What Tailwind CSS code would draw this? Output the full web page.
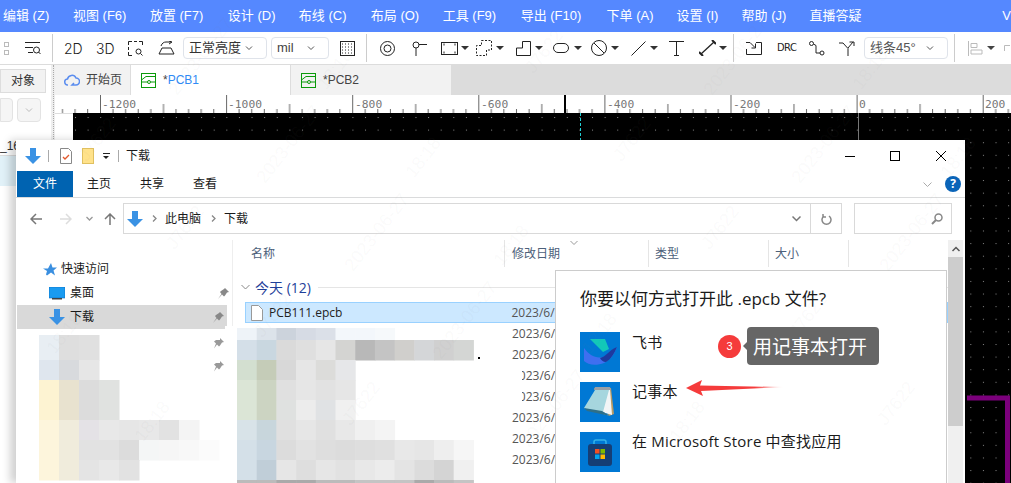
<!DOCTYPE html>
<html lang="zh">
<head>
    <meta charset="UTF-8">
    <title>PCB</title>
    <script src="https://cdn.jsdelivr.net/npm/@tailwindcss/browser@4"></script>
</head>
<body class="bg-white">
<div class="relative w-[1011px] h-[483px] overflow-hidden font-['Liberation_Sans','Noto_Sans_CJK_SC',sans-serif] text-[13px] text-[#222]">

    <!-- menu bar -->
    <div class="h-8 bg-[#5588ff] text-white flex items-center text-[13px] whitespace-nowrap">
        <span class="ml-[3px] w-[70px]">编辑 (Z)</span>
        <span class="w-[77px]">视图 (F6)</span>
        <span class="w-[78px]">放置 (F7)</span>
        <span class="w-[71px]">设计 (D)</span>
        <span class="w-[72px]">布线 (C)</span>
        <span class="w-[72px]">布局 (O)</span>
        <span class="w-[78px]">工具 (F9)</span>
        <span class="w-[86px]">导出 (F10)</span>
        <span class="w-[70px]">下单 (A)</span>
        <span class="w-[65px]">设置 (I)</span>
        <span class="w-[68px]">帮助 (J)</span>
        <span class="w-[193px]">直播答疑</span>
        <span>V</span>
    </div>

    <!-- toolbar -->
    <div class="h-[33px] border-b border-[#dcdcdc] flex items-center relative">
        <div class="ml-1 flex flex-col gap-[3px]"><i class="block w-[5px] h-[5px] border border-[#bbb]"></i><i class="block w-[5px] h-[5px] border border-[#bbb]"></i></div>
        <svg class="ml-4 w-4 h-4" viewBox="0 0 16 16" fill="none" stroke="#222"><path d="M0 2.500h15M0 7.500h8M3 12.500h5"/><circle cx="11.500" cy="10" r="3"/><path d="M13.500 12l2 2"/></svg>
        <i class="ml-[11px] w-px h-7 bg-[#ccc]"></i>
        <span class="ml-[11px] w-[32px] font-['Inter',sans-serif] font-light text-[14px]">2D</span>
        <span class="w-[32px] font-['Inter',sans-serif] font-light text-[14px]">3D</span>
        <svg class="w-[15px] h-[15px]" viewBox="0 0 15 15" fill="none" stroke="#222"><path d="M.5 4V.5H4M6 .5h3M11 .5h3.500V4M.5 6v3M.5 11v3.500H4"/><circle cx="10.500" cy="10.500" r="2.500"/><path d="M12.500 12.500l2 2"/></svg>
        <svg class="ml-[15px] w-[17px] h-[14px]" viewBox="0 0 17 14" fill="none" stroke="#222"><path d="M3 5C4 2 6 1 8 1h5M11 0l3 1-3 2M4 7h9l3 6H1z"/></svg>
        <div class="ml-[8px] w-[84px] h-[22px] border border-[#dfe3ea] rounded-sm flex items-center justify-between px-[5px] text-[#333]"><span>正常亮度</span><svg class="w-2 h-2 mr-2" viewBox="0 0 8 8" fill="none" stroke="#555"><path d="M1 2.500l3 3 3-3"/></svg></div>
        <div class="ml-[4px] w-[58px] h-[22px] border border-[#dfe3ea] rounded-sm flex items-center justify-between px-[5px] text-[#444]"><span>mil</span><svg class="w-2 h-2 mr-2" viewBox="0 0 8 8" fill="none" stroke="#555"><path d="M1 2.500l3 3 3-3"/></svg></div>
        <svg class="ml-[11px] w-[15px] h-[15px]" viewBox="0 0 15 15" fill="none" stroke="#222"><rect x=".5" y=".5" width="14" height="14"/><path d="M2 3h11M2 6h11M2 9h11M2 12h11" stroke-dasharray="1 2"/></svg>
        <i class="ml-[11px] w-px h-7 bg-[#ccc]"></i>
        <svg class="ml-[13px] w-[15px] h-[15px]" viewBox="0 0 15 15" fill="none" stroke="#222"><circle cx="7.500" cy="7.500" r="7"/><circle cx="7.500" cy="7.500" r="3.500"/></svg>
        <svg class="ml-[17px] w-[15px] h-[15px]" viewBox="0 0 15 15" fill="none" stroke="#222"><circle cx="4" cy="4" r="3"/><path d="M7 3.500h8M4 7v8"/></svg>
        <svg class="ml-[14px] w-[17px] h-[13px]" viewBox="0 0 17 13" fill="none" stroke="#222"><rect x=".5" y=".5" width="16" height="12"/><path d="M2.500 2.500h1M13.500 2.500h1M2.500 10.500h1M13.500 10.500h1" stroke-width="2"/></svg>
        <i class="ml-[3px] border-x-[4px] border-x-transparent border-t-[4px] border-t-[#333]"></i>
        <svg class="ml-[7px] w-[16px] h-[16px]" viewBox="0 0 16 16" fill="none" stroke="#222" stroke-dasharray="2 1.500"><path d="M5.500 .5H15.500V10H10.500V15.500H.5V5.500H5.500Z"/></svg>
        <i class="ml-[4px] border-x-[4px] border-x-transparent border-t-[4px] border-t-[#333]"></i>
        <svg class="ml-[12px] w-[15px] h-[15px]" viewBox="0 0 15 15" fill="none" stroke="#222"><path d="M6.500 .5H14.500V14.500H.5V7H6.500Z"/></svg>
        <i class="ml-[4px] border-x-[4px] border-x-transparent border-t-[4px] border-t-[#333]"></i>
        <svg class="ml-[10px] w-[16px] h-[10px]" viewBox="0 0 16 10" fill="none" stroke="#222"><rect x=".5" y=".5" width="15" height="9" rx="4.500"/></svg>
        <i class="ml-[5px] border-x-[4px] border-x-transparent border-t-[4px] border-t-[#333]"></i>
        <svg class="ml-[9px] w-[16px] h-[16px]" viewBox="0 0 16 16" fill="none" stroke="#222"><circle cx="8" cy="8" r="7.500"/><path d="M3 3l10 10"/></svg>
        <i class="ml-[4px] border-x-[4px] border-x-transparent border-t-[4px] border-t-[#333]"></i>
        <svg class="ml-[12px] w-[15px] h-[15px]" viewBox="0 0 15 15" fill="none" stroke="#222"><path d="M.5 14.500l14-14"/></svg>
        <i class="ml-[4px] border-x-[4px] border-x-transparent border-t-[4px] border-t-[#333]"></i>
        <svg class="ml-[11px] w-[15px] h-[15px]" viewBox="0 0 15 15" fill="none" stroke="#222"><path d="M0 .5h15M7.500 .5v14M5 14.500h5"/></svg>
        <svg class="ml-[15px] w-[17px] h-[16px]" viewBox="0 0 17 16" fill="none" stroke="#222"><path d="M2 14L15 2" stroke-width="1.300"/><path d="M0 12l4 4M13 0l4 4" stroke-width="2"/></svg>
        <i class="ml-[3px] border-x-[4px] border-x-transparent border-t-[4px] border-t-[#333]"></i>
        <i class="ml-[6px] w-px h-7 bg-[#ccc]"></i>
        <svg class="ml-[12px] w-[16px] h-[13px]" viewBox="0 0 16 13" fill="none" stroke="#222"><path d="M0 .5h4l5 5M9.500 1.500v4.500H5.500M10 .5h5.500V12.500H.5V7"/></svg>
        <span class="ml-[15px] w-[32px] font-['DejaVu_Sans',sans-serif] font-stretch-condensed text-[11px] tracking-[-0.5px]">DRC</span>
        <svg class="w-[16px] h-[15px]" viewBox="0 0 16 15" fill="none" stroke="#222"><circle cx="2.500" cy="2.500" r="2"/><circle cx="13" cy="12" r="2"/><path d="M4.500 3L7 4.500v7.500h4"/></svg>
        <svg class="ml-[14px] w-[16px] h-[15px]" viewBox="0 0 16 15" fill="none" stroke="#222"><path d="M0 2h4l5 5.500V15M9 7l5-6M10.500 1H15V5"/></svg>
        <div class="ml-[9px] w-[84px] h-[22px] border border-[#dfe3ea] rounded-sm flex items-center justify-between px-[5px] text-[#555]"><span>线条45°</span><svg class="w-2 h-2 mr-2" viewBox="0 0 8 8" fill="none" stroke="#555"><path d="M1 2.500l3 3 3-3"/></svg></div>
        <i class="ml-[6px] w-px h-7 bg-[#ccc]"></i>
        <svg class="ml-[13px] w-[15px] h-[15px]" viewBox="0 0 15 15" fill="none" stroke="#bbb"><path d="M.5 0v15M3 2.500h6v4H3zM3 9h11v4H3z"/></svg>
        <i class="ml-[4px] border-x-[4px] border-x-transparent border-t-[4px] border-t-[#444]"></i>
        <svg class="ml-[9px] w-[6px] h-[6px]" viewBox="0 0 6 6" fill="none" stroke="#bbb"><path d="M.5 6V.5H6"/></svg>
    </div>

    <!-- tabs and canvas -->
    <div class="flex h-[418px]">
        <div class="w-[51px] shrink-0 pt-1 text-[#333]">
            <div class="w-[46px] h-[24px] bg-[#f2f2f2] border border-[#ddd] flex items-center justify-center text-[12px]">对象</div>
            <div class="flex gap-1 mt-[5px]">
                <div class="w-[13px] h-6 border border-[#e3e3e3] rounded-r bg-[#f5f5f5]"></div>
                <div class="w-6 h-6 border border-[#e3e3e3] rounded bg-[#f5f5f5] flex items-center justify-center"><svg class="w-2 h-2" viewBox="0 0 8 8" fill="none" stroke="#bbb"><path d="M1 2.500l3 3 3-3"/></svg></div>
            </div>
            <div class="mt-[14px] border-b border-[#ddd] h-[20px] text-[12px] leading-5">_16</div>
            <div class="h-[30px] bg-[#e1f1f8]"></div>
        </div>
        <div class="w-1 shrink-0 bg-[#eee] flex justify-center"><i class="block w-px h-full border-l border-dotted border-[#aaa]"></i></div>
        <div class="flex-1 min-w-0 flex flex-col">
            <div class="h-[30px] flex bg-[#dcdcdc] shrink-0 text-[12px]">
                <div class="w-[76px] bg-[#f2f2f2] flex items-center gap-[6px] pl-[9px] border-r border-[#ddd]">
                    <svg class="w-[16px] h-[12px]" viewBox="0 0 16 12" fill="none" stroke="#5b8def" stroke-width="1.500"><path d="M4 11a3 3 0 0 1-.5-6 4.500 4.500 0 0 1 8.500-1 3.500 3.500 0 0 1 0 7H8l2-2"/></svg>
                    <span class="text-[#444]">开始页</span>
                </div>
                <div class="w-[160px] bg-white flex items-center pl-[10px] border-r border-[#ddd]">
                    <svg class="w-[15px] h-[15px] mr-[7px]" viewBox="0 0 15 15" fill="none" stroke="#0a9a0a"><rect x=".5" y=".5" width="14" height="14"/><circle cx="8" cy="9" r="1.500"/><path d="M.5 9H6.500M10 9h4.500M.5 7L5 3.500h9.500"/></svg>
                    <span class="text-[#2f8bf5]"><span class="text-[#444]">*</span>PCB1</span>
                </div>
                <div class="w-[160px] bg-[#f2f2f2] flex items-center pl-[10px]">
                    <svg class="w-[15px] h-[15px] mr-[7px]" viewBox="0 0 15 15" fill="none" stroke="#0a9a0a"><rect x=".5" y=".5" width="14" height="14"/><circle cx="8" cy="9" r="1.500"/><path d="M.5 9H6.500M10 9h4.500M.5 7L5 3.500h9.500"/></svg>
                    <span class="text-[#444]">*PCB2</span>
                </div>
            </div>
            <!-- ruler -->
            <svg class="h-[18px] w-[956px] shrink-0 bg-white" viewBox="0 0 956 18" font-family="DejaVu Sans Mono" font-size="11.300" fill="#777">
                <defs><pattern id="ticks" x="45" width="126.100" height="18" patternUnits="userSpaceOnUse"><path d="M.5 0v18M63.500 9v9M13 14v4M25.600 14v4M38.200 14v4M50.800 14v4M76 14v4M88.600 14v4M101.200 14v4M113.800 14v4" stroke="#666" fill="none"/></pattern></defs>
                <rect width="956" height="18" fill="url(#ticks)"/>
                <rect x="509" width="2" height="18" fill="#000"/>
                <text x="47" y="13">-1200</text><text x="173" y="13">-1000</text><text x="300" y="13">-800</text><text x="426" y="13">-600</text><text x="552" y="13">-400</text><text x="678" y="13">-200</text><text x="804" y="13">0</text><text x="930" y="13">200</text>
            </svg>
            <div class="flex-1 flex min-h-0">
                <div class="w-[18px] bg-white shrink-0 border-t border-[#ddd]"></div>
                <svg class="flex-1 h-[371px] bg-black" viewBox="0 0 938 371">
                    <defs><pattern id="dots" x="2" y="4" width="12.610" height="12.610" patternUnits="userSpaceOnUse"><rect width="1" height="1" fill="#8a8a8a"/></pattern></defs>
                    <rect width="938" height="371" fill="url(#dots)"/>
                    <path d="M507.500 0v27" stroke="#22d3d8" stroke-dasharray="3 2"/>
                    <path d="M785.500 0v27" stroke="#777"/>
                    <path d="M894 285H934.500V371" fill="none" stroke="#7b007b" stroke-width="5"/>
                </svg>
            </div>
        </div>
    </div>

    <!-- explorer window -->
    <div class="absolute left-4 top-[140px] w-[949px] h-[343px] bg-white shadow-[-6px_0_8px_rgba(0,0,0,0.18)] font-['Open_Sans','Noto_Sans_CJK_SC',sans-serif] text-[12px] text-[#1a1a1a] flex flex-col">
        <div class="h-[31px] flex items-center shrink-0">
            <svg class="ml-[9px] w-4 h-4" viewBox="0 0 16 16"><path d="M5 0h6v8h5l-8 8-8-8h5z" fill="#3a92e4"/></svg>
            <i class="ml-[7px] w-px h-[12px] bg-[#aaa]"></i>
            <svg class="ml-[11px] w-[12px] h-[16px]" viewBox="0 0 12 16" fill="none"><path d="M.5.5h8l3 3v12H.5z" fill="#fff" stroke="#888"/><path d="M3 9l2 2 4-4" stroke="#e2582c" stroke-width="1.300"/></svg>
            <svg class="ml-[10px] w-[12px] h-[16px]" viewBox="0 0 12 16"><rect x=".5" y=".5" width="11" height="15" fill="#ffe28a" stroke="#e0c060"/></svg>
            <i class="ml-[9px] w-[7px] h-[5px] border-t border-[#222] relative"><i class="absolute left-0 top-[2px] border-x-[3.500px] border-x-transparent border-t-[3px] border-t-[#222]"></i></i>
            <i class="ml-[8px] w-px h-[12px] bg-[#aaa]"></i>
            <span class="ml-[7px] pt-px">下载</span>
            <svg class="ml-auto mr-[35px] w-[10px] h-[10px]" viewBox="0 0 10 10" fill="none" stroke="#000"><path d="M0 5.500h10"/></svg>
            <svg class="mr-[36px] w-[10px] h-[10px]" viewBox="0 0 10 10" fill="none" stroke="#000"><rect x=".5" y=".5" width="9" height="9"/></svg>
            <svg class="mr-[19px] w-[10px] h-[10px]" viewBox="0 0 10 10" fill="none" stroke="#000"><path d="M0 0l10 10M10 0L0 10"/></svg>
        </div>
        <div class="h-[27px] flex border-b border-[#dadbdc] shrink-0 items-stretch">
            <div class="ml-px w-[56px] bg-[#0063b1] text-white flex items-center justify-center">文件</div>
            <span class="ml-[14px] w-[53px] flex items-center">主页</span>
            <span class="w-[53px] flex items-center">共享</span>
            <span class="flex items-center">查看</span>
            <svg class="ml-auto mr-[13px] self-center w-[9px] h-[9px]" viewBox="0 0 9 9" fill="none" stroke="#aaa"><path d="M.5 2.500l4 4 4-4"/></svg>
            <div class="mr-[4px] self-center w-4 h-4 rounded-full bg-[#0a64b8] text-white font-bold text-[12px] flex items-center justify-center">?</div>
        </div>
        <div class="h-[31px] mt-[5px] flex items-center shrink-0">
            <svg class="ml-[14px] w-3 h-3" viewBox="0 0 12 12" fill="none" stroke="#777" stroke-width="1.500"><path d="M12 6H1M6 1L1 6l5 5"/></svg>
            <svg class="ml-[18px] w-3 h-3" viewBox="0 0 12 12" fill="none" stroke="#ddd" stroke-width="1.500"><path d="M0 6h11M6 1l5 5-5 5"/></svg>
            <svg class="ml-[14px] w-[7px] h-[7px]" viewBox="0 0 7 7" fill="none" stroke="#999" stroke-width="1.300"><path d="M.5 2l3 3 3-3"/></svg>
            <svg class="ml-[11px] w-3 h-3" viewBox="0 0 12 12" fill="none" stroke="#777" stroke-width="1.500"><path d="M6 12V1M1 6l5-5 5 5"/></svg>
            <div class="ml-[7px] w-[719px] h-[31px] border border-[#d9d9d9] flex items-center">
                <svg class="ml-[3px] w-4 h-4" viewBox="0 0 16 16"><path d="M5 0h6v8h5l-8 8-8-8h5z" fill="#3a92e4"/></svg>
                <svg class="ml-[9px] w-[5px] h-[7px]" viewBox="0 0 5 7" fill="none" stroke="#888" stroke-width="1.300"><path d="M1 .5l3 3-3 3"/></svg>
                <span class="ml-[8px]">此电脑</span>
                <svg class="ml-[10px] w-[5px] h-[7px]" viewBox="0 0 5 7" fill="none" stroke="#888" stroke-width="1.300"><path d="M1 .5l3 3-3 3"/></svg>
                <span class="ml-[8px]">下载</span>
                <svg class="ml-auto mr-[9px] w-[9px] h-[9px]" viewBox="0 0 9 9" fill="none" stroke="#777" stroke-width="1.500"><path d="M.5 2.500l4 4 4-4"/></svg>
                <div class="w-[31px] h-full border-l border-[#d9d9d9] flex items-center justify-center"><svg class="w-[11px] h-[12px]" viewBox="0 0 11 12" fill="none" stroke="#888" stroke-width="1.500"><path d="M8 3a4.500 4.500 0 1 1-5 0M2 1v3h3"/></svg></div>
            </div>
            <div class="ml-[12px] w-[98px] h-[31px] border border-[#d9d9d9] flex items-center justify-end pr-[8px]"><svg class="w-3 h-3" viewBox="0 0 12 12" fill="none" stroke="#888" stroke-width="1.500"><circle cx="7.500" cy="4.500" r="3.500"/><path d="M5 7l-4 4" stroke-width="2"/></svg></div>
        </div>
        <div class="flex-1 flex min-h-0 mt-[6px]">
            <!-- nav pane -->
            <div class="w-[217px] shrink-0 border-r border-[#eee] pt-[17px]">
                <div class="h-6 flex items-center pl-[27px]">
                    <svg class="w-[14px] h-[13px]" viewBox="0 0 14 13"><path d="M8 0l1.500 4.500H14l-3.500 3 1.500 5-4-3-4 3-1-1 1-3.500L0 5.500h5z" fill="#3a8fe0"/></svg>
                    <span class="ml-[4px]">快速访问</span>
                </div>
                <div class="h-6 flex items-center pl-[33px]">
                    <svg class="w-[16px] h-[13px]" viewBox="0 0 16 13"><rect width="16" height="11" fill="#1a9bf0" stroke="#0a6cc0" stroke-width=".6"/><rect x="3" y="11" width="10" height="1.500" fill="#444"/></svg>
                    <span class="ml-[5px] flex-1">桌面</span>
                    <svg class="w-[11px] h-[11px] mr-[3px]" viewBox="0 0 11 11"><path d="M7 0l4 4-2 .5-2 3-1 1-2-2L0 11l3.500-5L2 4l1-1 3-2z" fill="#888"/></svg>
                </div>
                <div class="ml-px h-6 flex items-center pl-[32px] bg-[#d9d9d9] w-[210px]">
                    <svg class="w-4 h-4" viewBox="0 0 16 16"><path d="M5 0h6v8h5l-8 8-8-8h5z" fill="#3a92e4"/></svg>
                    <span class="ml-[5px] flex-1">下载</span>
                    <svg class="w-[11px] h-[11px] mr-[3px]" viewBox="0 0 11 11"><path d="M7 0l4 4-2 .5-2 3-1 1-2-2L0 11l3.500-5L2 4l1-1 3-2z" fill="#888"/></svg>
                </div>
            </div>
            <!-- file list -->
            <div class="flex-1 min-w-0 flex flex-col">
                <div class="h-[27px] flex text-[#4c607a] shrink-0">
                    <div class="w-[272px] pl-[18px] border-r border-[#e5e5e5] flex items-center">名称</div>
                    <div class="w-[144px] pl-[7px] border-r border-[#e5e5e5] flex items-center relative">修改日期<svg class="absolute left-[65px] top-0 w-2 h-[6px]" viewBox="0 0 8 6" fill="none" stroke="#999"><path d="M.5 1l3.500 3.500L7.500 1"/></svg></div>
                    <div class="w-[120px] pl-[6px] border-r border-[#e5e5e5] flex items-center">类型</div>
                    <div class="w-[80px] pl-[6px] border-r border-[#e5e5e5] flex items-center">大小</div>
                </div>
                <div class="h-[24px] mt-[8px] flex items-center shrink-0">
                    <svg class="ml-[8px] w-[9px] h-[7px]" viewBox="0 0 9 7" fill="none" stroke="#888"><path d="M.5 1l4 4 4-4"/></svg>
                    <span class="ml-[5px] text-[14px] text-[#1f3f99] whitespace-nowrap">今天 (12)</span>
                    <i class="ml-[7px] flex-1 h-px bg-[#e5e5e5]"></i>
                </div>
                <div class="h-[21px] mt-[3px] ml-[12px] bg-[#cce8ff] border border-[#99d1ff] flex items-center shrink-0 text-[#222]">
                    <svg class="ml-[5px] w-[12px] h-[16px]" viewBox="0 0 12 16" fill="#fff" stroke="#999"><path d="M.5.5h7l4 4v11H.5z"/></svg>
                    <span class="ml-[6px]">PCB111.epcb</span>
                    <span class="ml-[169px] text-[#555]">2023/6/</span>
                </div>
                <div class="pl-[279px] text-[#555] leading-[21px] h-[161px] overflow-hidden">
                    <div>2023/6/</div><div>2023/6/</div><div>2023/6/</div><div>2023/6/</div><div>2023/6/</div><div>2023/6/</div><div>2023/6/</div>
                </div>
            </div>
            <!-- scrollbar -->
            <div class="w-[15px] mr-[2px] shrink-0 bg-[#f0f0f0] flex flex-col">
                <div class="h-[17px] flex items-center justify-center"><svg class="w-[8px] h-[6px]" viewBox="0 0 8 6" fill="none" stroke="#555" stroke-width="1.500"><path d="M.5 5L4 1.500 7.500 5"/></svg></div>
                <div class="h-[169px] bg-[#cdcdcd]"></div>
            </div>
        </div>
    </div>

    <!-- mosaic over the private file names -->
    <svg id="mosaic" class="absolute left-0 top-0 w-[1011px] h-[483px] pointer-events-none" viewBox="0 0 1011 483"></svg>

    <!-- open-with dialog -->
    <div class="absolute left-[555px] top-[270px] w-[392px] h-[213px] bg-white border border-[#ccc] border-b-0 font-['Open_Sans','Noto_Sans_CJK_SC',sans-serif] pl-[24px] pt-4 text-[#1a1a1a]">
        <div class="text-[17px] leading-6">你要以何方式打开此 .epcb 文件?</div>
        <div class="mt-[21px] flex flex-col gap-[10px] text-[15px] tracking-[0.2px]">
            <div class="flex gap-3">
                <svg class="w-10 h-10" viewBox="0 0 40 40"><rect width="40" height="40" fill="#0078d4"/><path d="M10 7h15l4 10-6 3z" fill="#12c8b8"/><path d="M4 16c5 7 12 11 19 9 5-2 8-7 14-10-3 8-7 13-13 16-8 3-16 2-20-2z" fill="#3f6ff0"/><path d="M20 26c6-1 9-8 17-11-3 7-6 12-11 15-3 0-5-2-6-4z" fill="#1e3a9e"/></svg>
                <span class="leading-5">飞书</span>
            </div>
            <div class="flex gap-3">
                <svg class="w-10 h-10" viewBox="0 0 40 40"><rect width="40" height="40" fill="#0078d4"/><path d="M14 6h17l3 26-5 2z" fill="#b89a63"/><path d="M15 7h15l2 26-10-3z" fill="#f2f5f6"/><path d="M4 26L15 8h14L23 30l7 4-24-7z" fill="#a6d6de"/><path d="M4 26l18 3 8 5-23-5z" fill="#2f6f88"/><path d="M15 5h15l1 3H14z" fill="#9aa0a6"/></svg>
                <span class="leading-[18px]">记事本</span>
            </div>
            <div class="flex gap-3">
                <svg class="w-10 h-10" viewBox="0 0 40 40"><rect width="40" height="40" fill="#0078d4"/><rect x="8" y="12" width="24" height="22" rx="3" fill="#153e75"/><path d="M14 12V10a2 2 0 0 1 2-2h8a2 2 0 0 1 2 2v2" fill="none" stroke="#35b3e8" stroke-width="1.500"/><rect x="15" y="17" width="4.500" height="4.500" fill="#f25022"/><rect x="20.500" y="17" width="4.500" height="4.500" fill="#7fba00"/><rect x="15" y="22.500" width="4.500" height="4.500" fill="#00a4ef"/><rect x="20.500" y="22.500" width="4.500" height="4.500" fill="#ffb900"/></svg>
                <span class="leading-[18px]">在 Microsoft Store 中查找应用</span>
            </div>
        </div>
    </div>

    <!-- annotation -->
    <div class="absolute left-[718px] top-[335px] w-[23px] h-[23px] rounded-full bg-[#f53b3b] text-white text-[11px] flex items-center justify-center">3</div>
    <div class="absolute left-[747px] top-[327px] w-[132px] h-[38px] rounded-sm bg-[#666] text-white text-[19px] font-['Noto_Sans_CJK_SC',sans-serif] flex items-center pl-[6px]">用记事本打开<i class="absolute left-[-4px] top-[15px] border-y-[4px] border-y-transparent border-r-[4px] border-r-[#666]"></i></div>
    <svg class="absolute left-[686px] top-[379px] w-[100px] h-[17px]" viewBox="0 0 100 17">
        <defs><linearGradient id="fade" x1="0" x2="1" y1="0" y2="0"><stop offset="0" stop-color="#f53b3b"/><stop offset=".7" stop-color="#f53b3b"/><stop offset="1" stop-color="#f53b3b" stop-opacity="0"/></linearGradient></defs>
        <path d="M0 9L16 1l-2 5.500L98 8 15 12l2 5z" fill="url(#fade)"/>
    </svg>

    <!-- watermark -->
    <div id="watermark" class="absolute inset-0 pointer-events-none"></div>
</div>

<script>
    // mosaic cells: [x, y, width of each cell, height, colours]
    const mosaicRows = [
        [39, 335, 20, 25, ['#e8eef3', '#dedede', '#e0e0e0']],
        [39, 360, 20, 20, ['#dfe6ee', '#d8dadd', '#e6e6e6']],
        [39, 380, 20, 40, ['#fdf3d2', '#e8e2cf', '#dcdcdc', '#e0e2e0']],
        [39, 420, 20, 20, ['#fdf5dc', '#f0ecdc', '#e4e2e6', '#e8e8e8', '#e6e6e6', '#e8e8e8', '#e2e2e2', '#f4f4f4']],
        [39, 440, 20, 20, ['#fdf5dc', '#f0ecdc', '#e2e2e2', '#e2e2e2', '#dcdcdc', '#f4f6f6', '#f6f6f6', '#f8f8f8', '#fbfbfb']],
        [39, 460, 20, 20, ['#fdf5dc', '#f0ecdc', '#e4e4e4', '#e8e8e8', '#e2e2e2']],
        [237, 328, 19.700, 12, ['#eef3f8', '#dce3ea', '#ccd3dc', '#d6dbe4', '#dbe0e8', '#f3f7fb', '#f3f7fb', '#f6f9fb']],
        [237, 340, 19.700, 20, ['#d4dfe8', '#c9d7e0', '#dadada', '#dfdfdf', '#e6e6e6', '#d4d4d2', '#b8b8b8', '#c4c4c4', '#d0cfcc', '#d4d6d8', '#d0d0d0', '#d4d6d4']],
        [237, 360, 19.700, 20, ['#d3dfd0', '#c5ccb8', '#d8d8d8', '#e6e6e6', '#dcdcda', '#e6e7e9']],
        [237, 380, 19.700, 20, ['#dbe5d6', '#ccd4c2', '#e0e0e0', '#e6e6e6', '#e2e2e2', '#e6e6e6']],
        [237, 400, 19.700, 20, ['#dbe5d6', '#ccd4c2', '#dfe1e0', '#ececec', '#e0e2e4', '#f0f0f0']],
        [237, 420, 19.700, 20, ['#d8e3e8', '#c8d6dc', '#e0e0e0', '#e6e6e6', '#e0e0e0', '#e8e8e8', '#f0f0f0', '#f4f4f4']],
        [237, 440, 19.700, 20, ['#d4e0e8', '#c8d6e0', '#dcdcdc', '#e2e2e2', '#dedede', '#dcdcdc', '#dedede', '#e0e0e0', '#e8e8e8', '#e6e6e6', '#eeeeee', '#f6f6f6']],
        [237, 460, 19.700, 20, ['#d4e0e8', '#c0ced8', '#e6e6e6', '#dedede', '#e6e6e6', '#e2e2e2', '#e8e8e8', '#ececec', '#e4e4e4', '#dcdcdc', '#d4d4d4', '#f0f0f0']],
        [237, 480, 19.700, 3, ['#bbbbbb', '#bbbbbb', '#aaaaaa', '#aaaaaa', '#bbbbbb', '#bbbbbb', '#c4c4c4', '#c4c4c4', '#c4c4c4', '#aaaaaa', '#bbbbbb', '#c4c4c4']]
    ];
    let cells = '<rect x="27" y="333" width="200" height="150" fill="#fff"/><rect x="225" y="326" width="272" height="157" fill="#fff"/><rect x="497" y="360" width="25" height="50" fill="#fff"/>';
    mosaicRows.forEach(([x, y, w, h, colours]) => {
        colours.forEach((c, i) => {
            cells += `<rect x="${x + i * w}" y="${y}" width="${w + 0.5}" height="${h + 0.5}" fill="${c}"/>`;
        });
    });
    const pin = 'l4 0 0 -2 4 4 -2 .5 -2 3 -1 1 -2 -2 -3 4 2 -5 -2 -2z';
    cells += `<path d="M216 340${pin}M216 363${pin}" fill="#999"/><rect x="478" y="357" width="2" height="2" fill="#000"/>`;
    document.getElementById('mosaic').innerHTML = cells;

    // repeated diagonal watermark, only the marks that fall well inside the page
    const watermark = document.getElementById('watermark');
    const marks = [['J7622', 0, 0], ['2023-06-27', 170, 5], ['18:18', 240, -70]];
    for (let col = -1; col < 2; col++) {
        for (let step = 0; step < 6; step++) {
            marks.forEach(([text, dx, dy]) => {
                const x = 15 + col * 535 + step * 88 + dx;
                const y = 50 + step * 88 + dy;
                if (x < 40 || x > 970 || y < 40 || y > 440) return;
                const el = document.createElement('span');
                el.className = 'absolute text-[18px] whitespace-nowrap -rotate-[52deg] text-[#808080]/5';
                el.textContent = text;
                el.style.left = (x - 30) + 'px';
                el.style.top = (y - 12) + 'px';
                watermark.appendChild(el);
            });
        }
    }
</script>
</body>
</html>
